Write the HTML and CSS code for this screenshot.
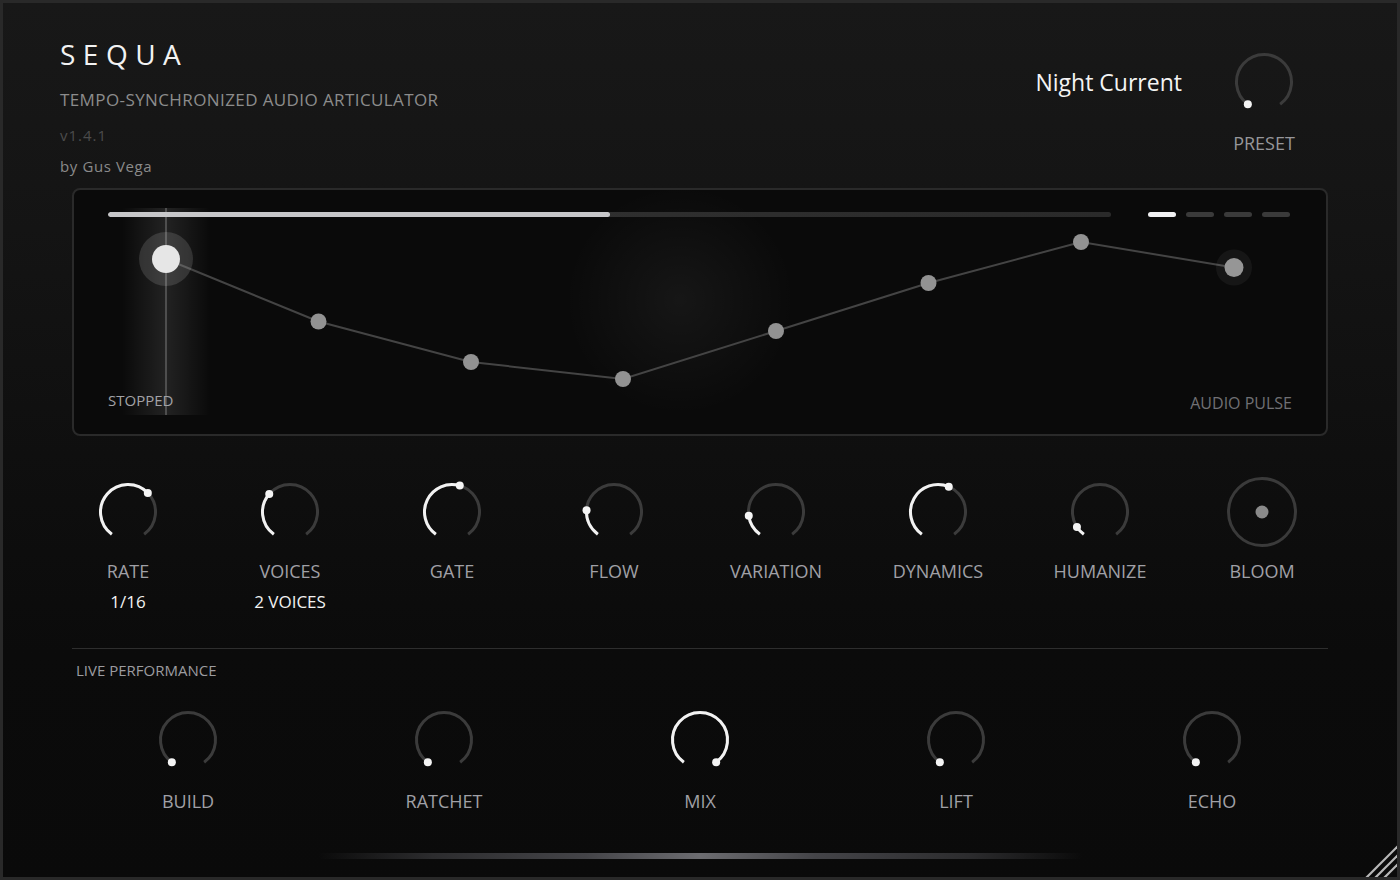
FILE: index.html
```html
<!DOCTYPE html>
<html lang="en">
<head>
<meta charset="utf-8">
<title>SEQUA</title>
<link rel="stylesheet" href="styles.css">
</head>
<body>
<div class="plugin">
  <header class="top">
    <div class="brand">
      <h1 class="logo">SEQUA</h1>
      <p class="subtitle">TEMPO-SYNCHRONIZED AUDIO ARTICULATOR</p>
      <p class="version">v1.4.1</p>
      <p class="author">by Gus Vega</p>
    </div>
    <div class="preset">
      <span class="preset-name">Night Current</span>
      <div class="knob">
        <svg class="knob-svg" data-value="0" viewBox="0 0 76 76" width="76" height="76"></svg>
        <span class="knob-label preset-label">PRESET</span>
      </div>
    </div>
  </header>

  <section class="sequencer">
    <svg class="seq-canvas" viewBox="74 190 1252 244" preserveAspectRatio="none">
      <defs>
        <linearGradient id="ph" x1="0" x2="1" y1="0" y2="0">
          <stop offset="0" stop-color="#ffffff" stop-opacity="0"/>
          <stop offset="0.5" stop-color="#ffffff" stop-opacity="0.10"/>
          <stop offset="1" stop-color="#ffffff" stop-opacity="0"/>
        </linearGradient>
        <radialGradient id="glow">
          <stop offset="0" stop-color="#ffffff" stop-opacity="0.05"/>
          <stop offset="1" stop-color="#ffffff" stop-opacity="0"/>
        </radialGradient>
      </defs>
      <circle cx="680" cy="300" r="115" fill="url(#glow)"/>
      <rect x="122" y="208" width="88" height="207" fill="url(#ph)"/>
      <line x1="166" y1="208" x2="166" y2="415" stroke="#4e4e4e" stroke-width="2"/>
      <polyline points="166,259 318.5,321.5 471,362 623,379 776,331 928.5,283 1081,242 1234,267.5" fill="none" stroke="#444444" stroke-width="2"/>
      <circle cx="166" cy="259" r="27" fill="#ffffff" fill-opacity="0.13"/>
      <circle cx="166" cy="259" r="14" fill="#e6e6e6"/>
      <circle cx="318.5" cy="321.5" r="8" fill="#929292"/>
      <circle cx="471" cy="362" r="8" fill="#929292"/>
      <circle cx="623" cy="379" r="8" fill="#929292"/>
      <circle cx="776" cy="331" r="8" fill="#929292"/>
      <circle cx="928.5" cy="283" r="8" fill="#929292"/>
      <circle cx="1081" cy="242" r="8" fill="#929292"/>
      <circle cx="1234" cy="267.5" r="18" fill="#ffffff" fill-opacity="0.05"/>
      <circle cx="1234" cy="267.5" r="9.5" fill="#969696"/>
    </svg>
    <div class="seq-top">
      <div class="progress"><div class="progress-fill" style="width:50%"></div></div>
      <div class="pages">
        <span class="page active"></span>
        <span class="page"></span>
        <span class="page"></span>
        <span class="page"></span>
      </div>
    </div>
    <div class="seq-bottom">
      <span class="status">STOPPED</span>
      <span class="mode">AUDIO PULSE</span>
    </div>
  </section>

  <section class="knob-row main-row">
    <div class="knob"><svg class="knob-svg" data-value="0.66" viewBox="0 0 76 76" width="76" height="76"></svg><span class="knob-label">RATE</span><span class="knob-value">1/16</span></div>
    <div class="knob"><svg class="knob-svg" data-value="0.33" viewBox="0 0 76 76" width="76" height="76"></svg><span class="knob-label">VOICES</span><span class="knob-value">2 VOICES</span></div>
    <div class="knob"><svg class="knob-svg" data-value="0.557" viewBox="0 0 76 76" width="76" height="76"></svg><span class="knob-label">GATE</span></div>
    <div class="knob"><svg class="knob-svg" data-value="0.2" viewBox="0 0 76 76" width="76" height="76"></svg><span class="knob-label">FLOW</span></div>
    <div class="knob"><svg class="knob-svg" data-value="0.16" viewBox="0 0 76 76" width="76" height="76"></svg><span class="knob-label">VARIATION</span></div>
    <div class="knob"><svg class="knob-svg" data-value="0.58" viewBox="0 0 76 76" width="76" height="76"></svg><span class="knob-label">DYNAMICS</span></div>
    <div class="knob"><svg class="knob-svg" data-value="0.073" viewBox="0 0 76 76" width="76" height="76"></svg><span class="knob-label">HUMANIZE</span></div>
    <div class="knob">
      <svg class="bloom-svg" viewBox="0 0 76 76" width="76" height="76">
        <circle class="bloom-ring" cx="38" cy="38" r="33.5"/>
        <circle class="bloom-dot" cx="38" cy="38" r="6.5"/>
      </svg>
      <span class="knob-label">BLOOM</span>
    </div>
  </section>

  <hr class="divider">
  <div class="section-title">LIVE PERFORMANCE</div>

  <section class="knob-row live-row">
    <div class="knob"><svg class="knob-svg" data-value="0" viewBox="0 0 76 76" width="76" height="76"></svg><span class="knob-label">BUILD</span></div>
    <div class="knob"><svg class="knob-svg" data-value="0" viewBox="0 0 76 76" width="76" height="76"></svg><span class="knob-label">RATCHET</span></div>
    <div class="knob"><svg class="knob-svg" data-value="1" viewBox="0 0 76 76" width="76" height="76"></svg><span class="knob-label">MIX</span></div>
    <div class="knob"><svg class="knob-svg" data-value="0" viewBox="0 0 76 76" width="76" height="76"></svg><span class="knob-label">LIFT</span></div>
    <div class="knob"><svg class="knob-svg" data-value="0" viewBox="0 0 76 76" width="76" height="76"></svg><span class="knob-label">ECHO</span></div>
  </section>

  <div class="bottom-bar"></div>

  <svg class="resize-grip" viewBox="0 0 36 36" width="36" height="36">
    <line x1="4" y1="38" x2="38" y2="4"/>
    <line x1="13" y1="38" x2="38" y2="13"/>
    <line x1="22" y1="38" x2="38" y2="22"/>
  </svg>
</div>
<script src="script.js"></script>
</body>
</html>
```

FILE: styles.css
```css
* { box-sizing: border-box; }

html, body {
  margin: 0;
  padding: 0;
  background: #0a0a0a;
}

body {
  font-family: "Open Sans", "DejaVu Sans", sans-serif;
  color: #a0a0a6;
}

.plugin {
  position: relative;
  width: 1400px;
  height: 880px;
  border: 3px solid #292929;
  background: linear-gradient(180deg, #181818 0px, #151515 180px, #0f0f0f 450px, #0b0b0b 650px, #0a0a0a 880px);
  overflow: hidden;
}

/* ---------- header ---------- */
.top {
  display: flex;
  justify-content: space-between;
  align-items: flex-start;
  padding: 37px 95px 0 57px;
  height: 185px;
}

.brand p, .brand h1 { margin: 0; }

.logo {
  font-size: 28px;
  line-height: 28px;
  font-weight: 400;
  letter-spacing: 7.5px;
  color: #f2f2f2;
}

.subtitle {
  margin-top: 23px !important;
  font-size: 17px;
  line-height: 17px;
  letter-spacing: 0.4px;
  color: #8c8c8c;
}

.version {
  margin-top: 20px !important;
  font-size: 15px;
  line-height: 14px;
  letter-spacing: 1px;
  color: #4c4c4c;
}

.author {
  margin-top: 17px !important;
  font-size: 15px;
  line-height: 15px;
  letter-spacing: 0.6px;
  color: #8a8a8a;
}

.preset {
  display: flex;
  align-items: flex-start;
  gap: 44px;
  margin-top: 4px;
}

.preset-name {
  font-size: 23px;
  line-height: 76px;
  font-weight: 500;
  color: #f4f4f4;
}

/* ---------- sequencer ---------- */
.sequencer {
  position: relative;
  display: flex;
  flex-direction: column;
  justify-content: space-between;
  height: 248px;
  margin: 0 69px;
  padding: 22px 36px 24px 34px;
  border: 2px solid #2a2a2a;
  border-radius: 8px;
  background: #0a0a0a;
}

.seq-canvas {
  position: absolute;
  left: 0;
  top: 0;
  width: 100%;
  height: 100%;
}

.seq-top, .seq-bottom {
  position: relative;
  display: flex;
}

.seq-top {
  align-items: center;
  gap: 37px;
}

.progress {
  flex: 1;
  height: 5px;
  border-radius: 3px;
  background: linear-gradient(90deg, #333333, #2a2a2a);
  overflow: hidden;
}

.progress-fill {
  height: 100%;
  border-radius: 3px;
  background: #c7c7c9;
}

.pages {
  display: flex;
  gap: 10px;
}

.page {
  width: 28px;
  height: 5px;
  border-radius: 3px;
  background: #3a3a3a;
}

.page.active { background: #f0f0f2; }

.seq-bottom {
  justify-content: space-between;
  align-items: flex-end;
}

.status {
  font-size: 15px;
  line-height: 15px;
  color: #a2a2a6;
  margin-bottom: 2px;
}

.mode {
  font-size: 16px;
  line-height: 16px;
  color: #707074;
  margin-bottom: -1px;
  margin-right: -2px;
}

/* ---------- knobs ---------- */
.knob-row {
  display: grid;
}

.main-row {
  grid-template-columns: repeat(8, 162px);
  margin: 38px 0 0 44px;
}

.live-row {
  grid-template-columns: repeat(5, 256px);
  margin: 24px 0 0 57px;
}

.knob {
  display: flex;
  flex-direction: column;
  align-items: center;
}

.knob-svg, .bloom-svg { display: block; }

.k-track {
  fill: none;
  stroke: #3b3b3b;
  stroke-width: 3;
}

.k-value {
  fill: none;
  stroke: #f2f2f2;
  stroke-width: 3;
}

.k-dot { fill: #f4f4f4; }

.bloom-ring {
  fill: none;
  stroke: #3a3a3a;
  stroke-width: 3;
}

.bloom-dot { fill: #8a8a8a; }

.knob-label {
  margin-top: 12px;
  font-size: 18px;
  line-height: 18px;
  color: #a0a0a6;
  white-space: nowrap;
}

.live-row .knob-label { margin-top: 14px; }

.preset-label { margin-top: 14px; color: #96969a; }

.knob-value {
  margin-top: 14px;
  font-size: 17px;
  line-height: 16px;
  font-weight: 500;
  color: #f2f2f2;
}

.divider {
  margin: 38px 69px 0;
  border: 0;
  height: 1px;
  background: #2e2e2e;
}

.section-title {
  margin: 14px 0 0 73px;
  font-size: 15px;
  line-height: 15px;
  color: #9c9ca0;
}

.bottom-bar {
  width: 765px;
  height: 6px;
  margin: 43px auto 0;
  border-radius: 3px;
  background: linear-gradient(90deg, rgba(60,60,64,0) 0%, #2c2c2e 15%, #444448 35%, #6c6c70 50%, #444448 65%, #2c2c2e 85%, rgba(60,60,64,0) 100%);
}

.resize-grip {
  position: absolute;
  right: 0;
  bottom: 0;
}

.resize-grip line {
  stroke: #b8b8b8;
  stroke-width: 2.2;
}
```

FILE: script.js
```js
(function () {
  var START = -144, RANGE = 288, CX = 38, CY = 38, R = 27.5;
  function pt(deg) {
    var a = deg * Math.PI / 180;
    return [(CX + R * Math.sin(a)).toFixed(2), (CY - R * Math.cos(a)).toFixed(2)];
  }
  function arc(a0, a1) {
    var p0 = pt(a0), p1 = pt(a1);
    var large = (a1 - a0) > 180 ? 1 : 0;
    return 'M' + p0[0] + ' ' + p0[1] + ' A' + R + ' ' + R + ' 0 ' + large + ' 1 ' + p1[0] + ' ' + p1[1];
  }
  var svgs = document.querySelectorAll('.knob-svg');
  for (var i = 0; i < svgs.length; i++) {
    var svg = svgs[i];
    var v = parseFloat(svg.getAttribute('data-value'));
    var ang = START + v * RANGE;
    var html = '<path class="k-track" d="' + arc(START, START + RANGE) + '"/>';
    if (v > 0) html += '<path class="k-value" d="' + arc(START, ang) + '"/>';
    var d = pt(ang);
    html += '<circle class="k-dot" cx="' + d[0] + '" cy="' + d[1] + '" r="4"/>';
    svg.innerHTML = html;
  }
})();
```
